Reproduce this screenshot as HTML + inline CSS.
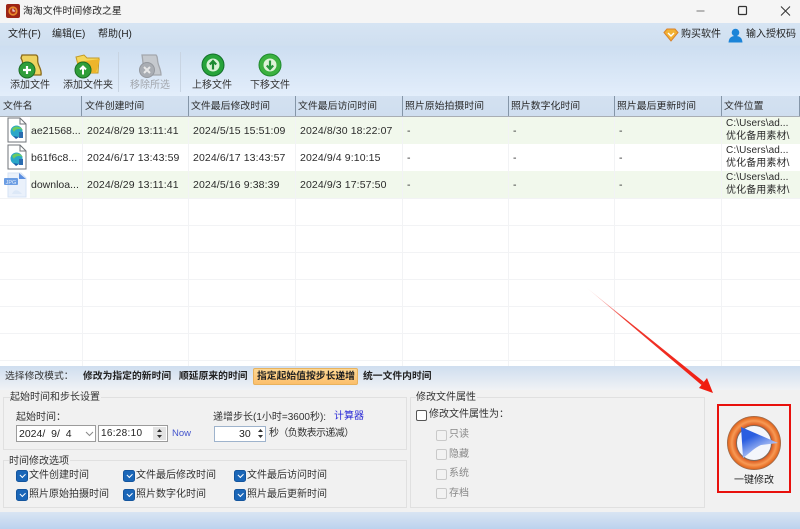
<!DOCTYPE html>
<html><head><meta charset="utf-8">
<style>
html,body{margin:0;padding:0;background:#fff}
#a{position:relative;width:800px;height:529px;overflow:hidden;background:#fff;font-family:"Liberation Sans","Noto Sans CJK SC",sans-serif;font-size:10px;color:#222;filter:blur(.35px)}
#a div,#a span.t{position:absolute;white-space:nowrap}
.t{line-height:14px}
.hc{top:96px;height:20px;line-height:22px;font-size:9.9px;color:#2b2b2b;padding-left:3px}
.hl{top:96px;width:1px;height:20px;background:#8596a8}
.vl{top:117px;width:1px;height:249px;background:#f2f3f5}
.hg{left:0;width:800px;height:1px;background:#f2f3f5}
.c{font-size:10.5px;color:#2b2b2b;line-height:14px;letter-spacing:.11px}
.p{font-size:10px;color:#2b2b2b;line-height:12.5px;letter-spacing:.1px}
.tb{font-size:10px;color:#333;line-height:14px}
.cb{width:10px;height:10px;background:#1a66b8;border-radius:2.5px;border:1px solid #14559d}
.cb:after{content:"";position:absolute;left:2.5px;top:1.5px;width:4px;height:2.5px;border-left:1.3px solid #fff;border-bottom:1.3px solid #fff;transform:rotate(-45deg)}
.ck{font-size:10px;line-height:14px;color:#333}
.dis{width:9px;height:9px;border:1px solid #c9c9c9;border-radius:2px;background:#f2f2f2}
.m{font-size:9.8px;font-weight:bold;color:#222;line-height:14px}
.gb{border:1px solid #e0e0e0;background:#f1f1f1;box-sizing:border-box}
.gt{background:#f1f1f1;font-size:10px;line-height:13px;color:#333;padding-right:1px}
</style></head><body>
<div id="a">
<!-- title -->
<div style="left:0;top:0;width:800px;height:23px;background:#f5f5f5"></div>
<svg style="position:absolute;left:6px;top:4px" width="14" height="14" viewBox="0 0 14 14"><rect width="14" height="14" rx="2" fill="#9c2415"/><circle cx="7" cy="7" r="4.6" fill="#e98a2b"/><circle cx="7" cy="7" r="3" fill="#b4321a"/><path d="M7 4.5V7H9.2" stroke="#fff" stroke-width="1" fill="none"/></svg>
<div class="t" style="left:23px;top:4px;font-size:9.9px;line-height:15px;color:#222">淘淘文件时间修改之星</div>
<svg style="position:absolute;left:696px;top:4px" width="100" height="14" viewBox="0 0 100 14"><path d="M0.5 7H8.5" stroke="#777" stroke-width="1"/><rect x="42.5" y="2.5" width="8" height="8" rx="1" fill="none" stroke="#333" stroke-width="1.2"/><path d="M85 2.5L94 11.5M94 2.5L85 11.5" stroke="#333" stroke-width="1"/></svg>
<!-- menu+toolbar -->
<div style="left:0;top:23px;width:800px;height:23px;background:linear-gradient(#d6e4f3,#cfdff0)"></div>
<div style="left:0;top:46px;width:800px;height:50px;background:linear-gradient(#cddef1,#e3eefb)"></div>
<div class="t" style="left:8px;top:28px">文件(F)</div>
<div class="t" style="left:52px;top:28px">编辑(E)</div>
<div class="t" style="left:98px;top:28px">帮助(H)</div>
<svg style="position:absolute;left:663px;top:28px" width="16" height="14" viewBox="0 0 16 14"><path d="M1 4.5L4 1H12L15 4.5L8 13Z" fill="#f2b233" stroke="#d9822b" stroke-width="1"/><path d="M5 5L8 8L11 5" stroke="#fff" stroke-width="1.4" fill="none"/></svg>
<div class="t" style="left:681px;top:28px">购买软件</div>
<svg style="position:absolute;left:728px;top:28px" width="15" height="15" viewBox="0 0 15 15"><circle cx="7.5" cy="4.5" r="3.8" fill="#1b84d8"/><path d="M0.5 14.5C1 9 4 8 7.5 8S14 9 14.5 14.5Z" fill="#1b84d8"/></svg>
<div class="t" style="left:746px;top:28px">输入授权码</div>
<!-- toolbar icons -->
<svg style="position:absolute;left:17px;top:53px" width="26" height="26" viewBox="0 0 26 26"><path d="M5 2H19C22 3 20 7 21 10C22 14 25 17 24 22H6C6 16 7 10 4 5Z" fill="#eed25e" stroke="#8a6a1a" stroke-width="1.3"/><circle cx="10" cy="17" r="8" fill="#2f9e3a" stroke="#1b6e26"/><path d="M6 17H14M10 13V21" stroke="#fff" stroke-width="2.2"/></svg>
<svg style="position:absolute;left:74px;top:54px" width="27" height="25" viewBox="0 0 27 25"><path d="M2 3L10 1L13 4L25 4L24 19H6Z" fill="#f5d75a" stroke="#c39a26"/><path d="M3 8L26 5L22 19H6Z" fill="#edb52c"/><circle cx="9" cy="16" r="8" fill="#2f9e3a" stroke="#1b6e26"/><path d="M9 20.5V13M6 15.5L9 12.5L12 15.5" stroke="#fff" stroke-width="2" fill="none"/></svg>
<svg style="position:absolute;left:137px;top:53px" width="26" height="26" viewBox="0 0 26 26"><path d="M5 2H19C21 4 20 6 21 10C22 14 24 17 24 22L8 22C6 14 6 8 5 2Z" fill="#c5c9ce" stroke="#a3a7ad" stroke-width="1.3"/><circle cx="10" cy="17" r="7.5" fill="#a9adb3" stroke="#94989e"/><path d="M7 14L13 20M13 14L7 20" stroke="#e8e8e8" stroke-width="2"/></svg>
<svg style="position:absolute;left:201px;top:53px" width="24" height="24" viewBox="0 0 24 24"><circle cx="12" cy="12" r="11" fill="#27a33a" stroke="#12702a"/><circle cx="12" cy="12" r="6.5" fill="#d9f2d6"/><path d="M12 16.5V9M8.8 11.5L12 8L15.2 11.5" stroke="#1c8a30" stroke-width="2.2" fill="none"/></svg>
<svg style="position:absolute;left:258px;top:53px" width="24" height="24" viewBox="0 0 24 24"><circle cx="12" cy="12" r="11" fill="#3cb13f" stroke="#1f8a2e"/><circle cx="12" cy="12" r="6.5" fill="#dff3d8"/><path d="M12 7.5V15M8.8 12.5L12 16L15.2 12.5" stroke="#27953a" stroke-width="2.2" fill="none"/></svg>
<div class="tb" style="left:10px;top:79px">添加文件</div>
<div class="tb" style="left:63px;top:79px">添加文件夹</div>
<div class="tb" style="left:130px;top:79px;color:#a2a6ac">移除所选</div>
<div class="tb" style="left:192px;top:79px">上移文件</div>
<div class="tb" style="left:250px;top:79px">下移文件</div>
<div style="left:118px;top:52px;width:1px;height:40px;background:#c8d4e2"></div>
<div style="left:180px;top:52px;width:1px;height:40px;background:#c8d4e2"></div>
<!-- header -->
<div style="left:0;top:96px;width:800px;height:20px;background:linear-gradient(#d3e1f1,#cfdeef)"></div>
<div style="left:0;top:116px;width:800px;height:1px;background:#a9aeb4"></div>
<div class="hc" style="left:0">文件名</div>
<div class="hc" style="left:82px">文件创建时间</div>
<div class="hc" style="left:188px">文件最后修改时间</div>
<div class="hc" style="left:295px">文件最后访问时间</div>
<div class="hc" style="left:402px">照片原始拍摄时间</div>
<div class="hc" style="left:508px">照片数字化时间</div>
<div class="hc" style="left:614px">照片最后更新时间</div>
<div class="hc" style="left:721px">文件位置</div>
<div class="hl" style="left:81px"></div><div class="hl" style="left:188px"></div><div class="hl" style="left:295px"></div><div class="hl" style="left:402px"></div><div class="hl" style="left:508px"></div><div class="hl" style="left:614px"></div><div class="hl" style="left:721px"></div><div class="hl" style="left:799px"></div>
<!-- rows -->
<div style="left:0;top:117px;width:800px;height:27px;background:#f1f8ec"></div>
<div style="left:0;top:171px;width:800px;height:27px;background:#f1f8ec"></div>
<div style="left:0;top:117px;width:30px;height:81px;background:#fff"></div>
<div class="hg" style="top:198px"></div><div class="hg" style="top:225px"></div><div class="hg" style="top:252px"></div><div class="hg" style="top:279px"></div><div class="hg" style="top:306px"></div><div class="hg" style="top:333px"></div><div class="hg" style="top:360px"></div>
<div class="vl" style="left:82px"></div><div class="vl" style="left:188px"></div><div class="vl" style="left:295px"></div><div class="vl" style="left:402px"></div><div class="vl" style="left:508px"></div><div class="vl" style="left:614px"></div><div class="vl" style="left:721px"></div>
<svg style="position:absolute;left:7px;top:117px" width="20" height="27" viewBox="0 0 20 27"><path d="M1 1H13L19 7V25H1Z" fill="#fff" stroke="#6f7378"/><path d="M13 1V7H19" fill="none" stroke="#6f7378"/><circle cx="9.5" cy="14.5" r="6" fill="#2aa7c9"/><path d="M5 12C8 8 13 9 16 13C12 11 8 12 7 15Z" fill="#6ccb5f"/><path d="M6 19L12 20L9 22Z" fill="#1d5fa8"/><rect x="12" y="15" width="4" height="6" fill="#2b6cb0"/></svg>
<svg style="position:absolute;left:7px;top:144px" width="20" height="27" viewBox="0 0 20 27"><path d="M1 1H13L19 7V25H1Z" fill="#fff" stroke="#6f7378"/><path d="M13 1V7H19" fill="none" stroke="#6f7378"/><circle cx="9.5" cy="14.5" r="6" fill="#2aa7c9"/><path d="M5 12C8 8 13 9 16 13C12 11 8 12 7 15Z" fill="#6ccb5f"/><path d="M6 19L12 20L9 22Z" fill="#1d5fa8"/><rect x="12" y="15" width="4" height="6" fill="#2b6cb0"/></svg>
<svg style="position:absolute;left:4px;top:172px" width="23" height="26" viewBox="0 0 23 26"><path d="M4 1H17L22 6V25H4Z" fill="#eaf1fb" stroke="#d6e3f4"/><path d="M15 1L22 7H15Z" fill="#5b8ee0"/><rect x="0" y="6" width="14" height="7" rx="1" fill="#6b9de3"/><text x="7" y="12" font-size="5.5" fill="#e7f0fc" text-anchor="middle" font-family="Liberation Sans">JPG</text><path d="M8 22C10 17 14 17 18 22Z" fill="#dce8f7"/></svg>
<div class="c" style="left:31px;top:124px;letter-spacing:0">ae21568...</div>
<div class="c" style="left:31px;top:151px;letter-spacing:0">b61f6c8...</div>
<div class="c" style="left:31px;top:178px;letter-spacing:0">downloa...</div>
<div class="c" style="left:87px;top:124px">2024/8/29 13:11:41</div>
<div class="c" style="left:87px;top:151px">2024/6/17 13:43:59</div>
<div class="c" style="left:87px;top:178px">2024/8/29 13:11:41</div>
<div class="c" style="left:193px;top:124px">2024/5/15 15:51:09</div>
<div class="c" style="left:193px;top:151px">2024/6/17 13:43:57</div>
<div class="c" style="left:193px;top:178px">2024/5/16 9:38:39</div>
<div class="c" style="left:300px;top:124px">2024/8/30 18:22:07</div>
<div class="c" style="left:300px;top:151px">2024/9/4 9:10:15</div>
<div class="c" style="left:300px;top:178px">2024/9/3 17:57:50</div>
<div class="c" style="left:407px;top:124px">-</div><div class="c" style="left:407px;top:151px">-</div><div class="c" style="left:407px;top:178px">-</div>
<div class="c" style="left:513px;top:124px">-</div><div class="c" style="left:513px;top:151px">-</div><div class="c" style="left:513px;top:178px">-</div>
<div class="c" style="left:619px;top:124px">-</div><div class="c" style="left:619px;top:151px">-</div><div class="c" style="left:619px;top:178px">-</div>
<div class="p" style="left:726px;top:118px">C:\Users\ad...<br>优化备用素材\</div>
<div class="p" style="left:726px;top:145px">C:\Users\ad...<br>优化备用素材\</div>
<div class="p" style="left:726px;top:172px">C:\Users\ad...<br>优化备用素材\</div>
<!-- bottom -->
<div style="left:0;top:366px;width:800px;height:163px;background:#f1f1f1"></div>
<div style="left:0;top:366px;width:800px;height:24px;background:linear-gradient(#cfdeef,#f0f2f5)"></div>
<div style="left:0;top:512px;width:800px;height:17px;background:linear-gradient(#d9e5f3,#bcd2ee)"></div>
<div class="t" style="left:5px;top:370px;font-size:9.8px;color:#333">选择修改模式：</div>
<div class="m" style="left:83px;top:370px">修改为指定的新时间</div>
<div class="m" style="left:179px;top:370px">顺延原来的时间</div>
<div style="left:253px;top:368px;width:105px;height:17px;box-sizing:border-box;border:1px solid #e8b25e;background:linear-gradient(#fdd793,#fbbf6c);border-radius:2px"></div>
<div class="m" style="left:257px;top:370px">指定起始值按步长递增</div>
<div class="m" style="left:363px;top:370px">统一文件内时间</div>
<!-- group 1 -->
<div class="gb" style="left:3px;top:397px;width:404px;height:53px"></div>
<div class="gt" style="left:10px;top:391px">起始时间和步长设置</div>
<div class="t" style="left:16px;top:411px;color:#333">起始时间：</div>
<div style="left:16px;top:425px;width:80px;height:17px;box-sizing:border-box;background:#fff;border:1px solid #9b9b9b"></div>
<div class="t" style="left:19px;top:427px;font-size:10.5px;white-space:pre">2024/  9/  4</div>
<svg style="position:absolute;left:85px;top:431px" width="9" height="6" viewBox="0 0 9 6"><path d="M1 1L4.5 4.5L8 1" stroke="#888" fill="none"/></svg>
<div style="left:98px;top:425px;width:70px;height:17px;box-sizing:border-box;background:#fff;border:1px solid #9b9b9b"></div>
<div class="t" style="left:101px;top:427px;font-size:10px;letter-spacing:.3px">16:28:10</div>
<div style="left:153px;top:427px;width:13px;height:13px;background:#e3e3e3"></div>
<svg style="position:absolute;left:156px;top:428px" width="7" height="11" viewBox="0 0 7 11"><path d="M3.5 1L6 4H1ZM3.5 10L1 7H6Z" fill="#333"/></svg>
<div class="t" style="left:172px;top:427px;font-size:9.5px;color:#4455cc">Now</div>
<div class="t" style="left:213px;top:411px;color:#333">递增步长(1小时=3600秒):</div>
<div class="t" style="left:334px;top:410px;color:#2a2ad6">计算器</div>
<div style="left:214px;top:426px;width:52px;height:16px;box-sizing:border-box;background:#fff;border:1px solid #9eb3cc"></div>
<div class="t" style="left:239px;top:427px;font-size:10.5px">30</div>
<svg style="position:absolute;left:257px;top:428px" width="7" height="11" viewBox="0 0 7 11"><path d="M3.5 1L6 4H1ZM3.5 10L1 7H6Z" fill="#333"/></svg>
<div class="t" style="left:269px;top:427px;color:#333;letter-spacing:-.6px">秒（负数表示递减）</div>
<!-- group 2 -->
<div class="gb" style="left:3px;top:460px;width:404px;height:48px"></div>
<div class="gt" style="left:9px;top:455px">时间修改选项</div>
<div class="cb" style="left:16px;top:470px"></div><div class="ck" style="left:29px;top:469px">文件创建时间</div>
<div class="cb" style="left:123px;top:470px"></div><div class="ck" style="left:136px;top:469px">文件最后修改时间</div>
<div class="cb" style="left:234px;top:470px"></div><div class="ck" style="left:247px;top:469px">文件最后访问时间</div>
<div class="cb" style="left:16px;top:489px"></div><div class="ck" style="left:29px;top:488px">照片原始拍摄时间</div>
<div class="cb" style="left:123px;top:489px"></div><div class="ck" style="left:136px;top:488px">照片数字化时间</div>
<div class="cb" style="left:234px;top:489px"></div><div class="ck" style="left:247px;top:488px">照片最后更新时间</div>
<!-- group 3 -->
<div class="gb" style="left:410px;top:397px;width:295px;height:111px"></div>
<div class="gt" style="left:416px;top:391px">修改文件属性</div>
<div style="left:416px;top:410px;width:9px;height:9px;border:1px solid #555;border-radius:2px;background:#fff"></div>
<div class="ck" style="left:429px;top:408px">修改文件属性为：</div>
<div class="dis" style="left:436px;top:430px"></div><div class="ck" style="left:449px;top:428px;color:#888">只读</div>
<div class="dis" style="left:436px;top:449px"></div><div class="ck" style="left:449px;top:448px;color:#888">隐藏</div>
<div class="dis" style="left:436px;top:469px"></div><div class="ck" style="left:449px;top:467px;color:#888">系统</div>
<div class="dis" style="left:436px;top:488px"></div><div class="ck" style="left:449px;top:487px;color:#888">存档</div>
<!-- button -->
<svg style="position:absolute;left:726px;top:415px" width="56" height="56" viewBox="0 0 56 56"><defs><radialGradient id="g" cx=".5" cy=".5" r=".5"><stop offset=".65" stop-color="#d9541a"/><stop offset=".82" stop-color="#f79a55"/><stop offset=".95" stop-color="#e66b22"/><stop offset="1" stop-color="#8a6a55"/></radialGradient><linearGradient id="b" x1="0" y1="0" x2=".6" y2="1"><stop offset=".35" stop-color="#2a5ee0"/><stop offset="1" stop-color="#e8eefc"/></linearGradient></defs><circle cx="28" cy="28" r="27" fill="url(#g)"/><circle cx="28" cy="28" r="17.5" fill="#f4f6fb" stroke="#7d6a5c"/><path d="M15 12L52 28L35 30C28 33 24 38 17 43Z" fill="url(#b)"/></svg>
<div class="ck" style="left:734px;top:474px;color:#222">一键修改</div>
<div style="left:717px;top:404px;width:74px;height:89px;box-sizing:border-box;border:2px solid #e8100c"></div>
<!-- arrow -->
<svg style="position:absolute;left:570px;top:270px" width="160" height="135" viewBox="0 0 160 135"><defs><linearGradient id="r" gradientUnits="userSpaceOnUse" x1="17" y1="18" x2="142" y2="122"><stop offset="0" stop-color="#f3a0a0" stop-opacity=".3"/><stop offset=".3" stop-color="#ef3a30"/><stop offset="1" stop-color="#f01c10"/></linearGradient></defs><path d="M17 18L134 112L131.5 115Z" fill="url(#r)"/><path d="M143 123L129 118L137 108Z" fill="#f01c10"/></svg>
</div>
</body></html>
